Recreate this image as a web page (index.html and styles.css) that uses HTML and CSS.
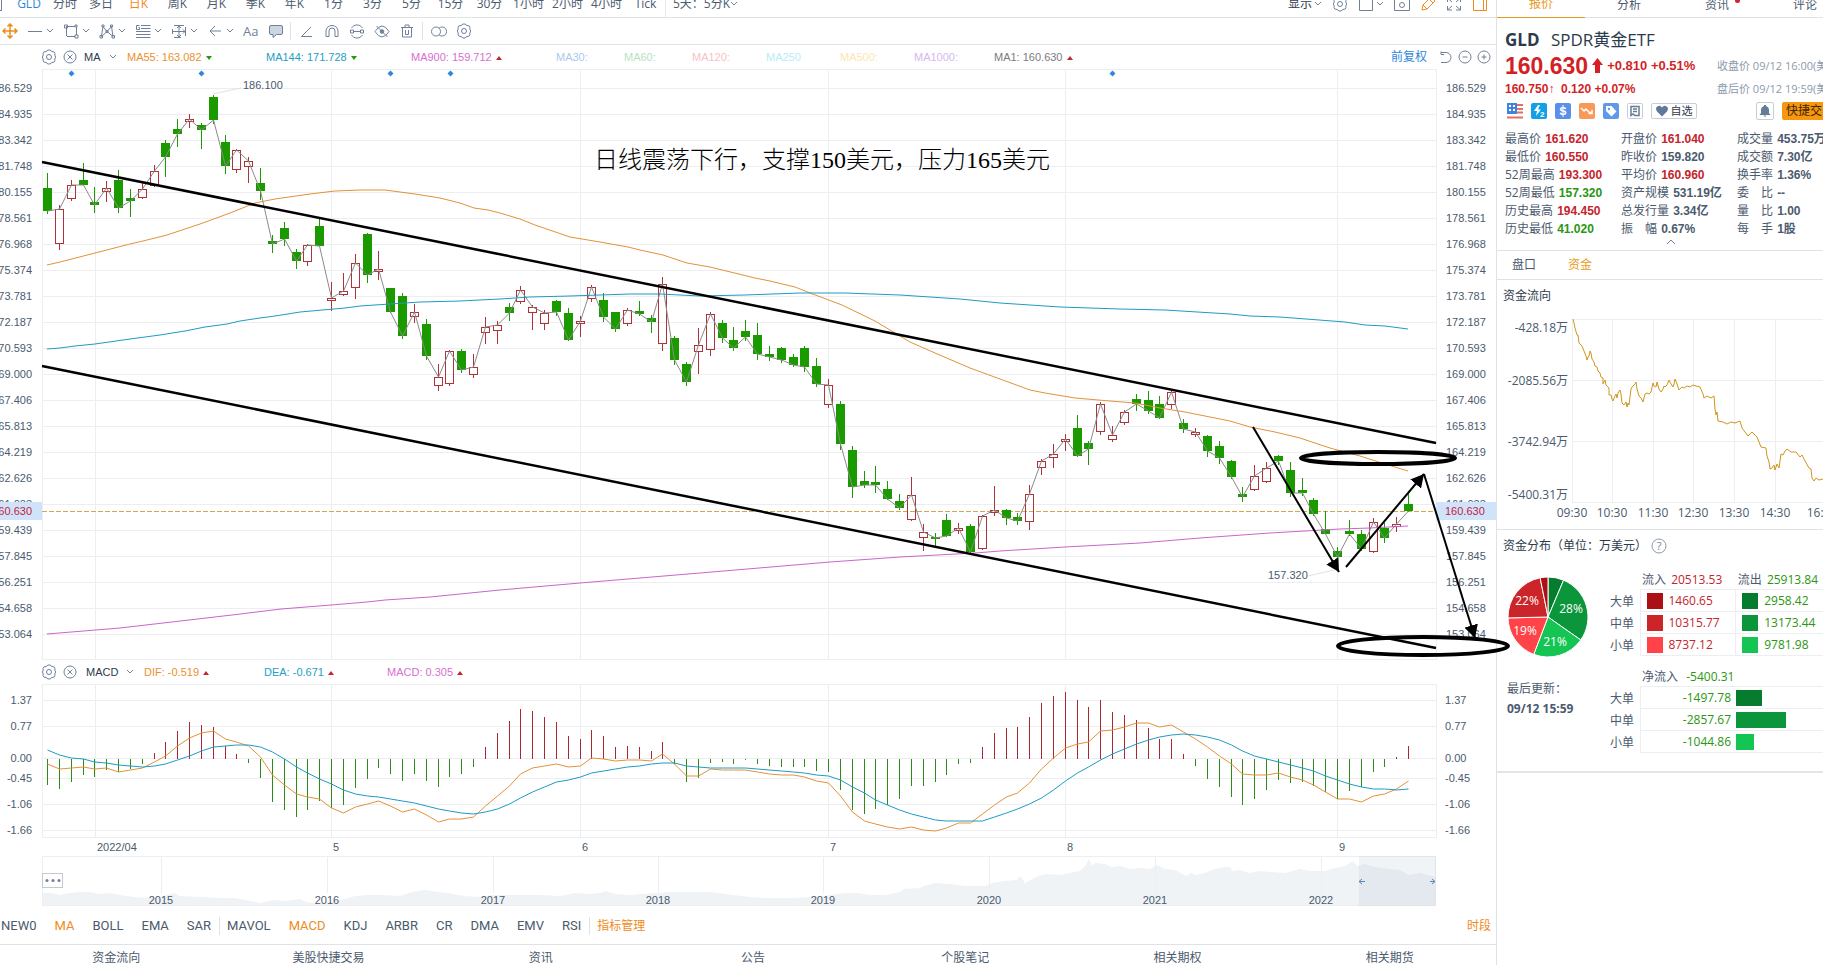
FILE: index.html
```html
<!DOCTYPE html>
<html lang="zh-CN">
<head>
    <meta charset="UTF-8">
    <meta name="viewport" content="width=device-width, initial-scale=1.0">
    <title>GLD SPDR黄金ETF</title>
    <link rel="stylesheet" href="styles.css">
</head>
<body>

    <!-- shared icons -->
    <svg class="sprite" aria-hidden="true">
        <symbol id="i-chev" viewBox="0 0 8 6"><path d="M1 1l3 3 3-3"/></symbol>
        <symbol id="i-gear" viewBox="0 0 16 16">
            <path d="M6 1.5Q8 .3 10 1.5L10.600 2.600Q12 2.400 13.400 3.100Q14.300 4.600 13.800 6L14.600 8L13.800 10Q14.300 11.400 13.400 12.900Q12 13.600 10.600 13.400L10 14.500Q8 15.700 6 14.500L5.400 13.400Q4 13.600 2.600 12.900Q1.700 11.400 2.200 10L1.400 8L2.200 6Q1.700 4.600 2.600 3.100Q4 2.400 5.400 2.600Z"/>
            <circle cx="8" cy="8" r="2.500"/>
        </symbol>
        <symbol id="i-close" viewBox="0 0 14 14"><circle cx="7" cy="7" r="6"/><path d="M4.500 4.500l5 5M9.500 4.500l-5 5"/></symbol>
    </svg>

    <div class="terminal">
        <main class="chart-area">

            <nav class="periods">
                <span class="edge-box"></span>
                <button class="period blue">GLD</button>
                <button class="period">分时</button>
                <button class="period">多日</button>
                <button class="period wide active">日K</button>
                <button class="period wide">周K</button>
                <button class="period wide">月K</button>
                <button class="period wide">季K</button>
                <button class="period wide">年K</button>
                <button class="period wide">1分</button>
                <button class="period wide">3分</button>
                <button class="period wide">5分</button>
                <button class="period wide">15分</button>
                <button class="period wide">30分</button>
                <button class="period wide">1小时</button>
                <button class="period wide">2小时</button>
                <button class="period wide">4小时</button>
                <button class="period wide">Tick</button>
                <button class="period combo">5天：5分K<svg class="chev"><use href="#i-chev"/></svg></button>
                <div class="view-tools">
                    <button class="tool dark">显示<svg class="chev"><use href="#i-chev"/></svg></button>
                    <button class="tool" aria-label="设置"><svg class="icon"><use href="#i-gear"/></svg></button>
                    <button class="tool" aria-label="布局"><svg class="icon" viewBox="0 0 16 16"><path d="M1.500 1.500h13v13h-13z"/></svg><svg class="chev"><use href="#i-chev"/></svg></button>
                    <button class="tool" aria-label="截图"><svg class="icon" viewBox="0 0 16 16"><path d="M.5 3.500h4l1-2h5l1 2h4v11H.5z"/><circle cx="8" cy="9" r="2.500"/></svg></button>
                    <button class="tool orange" aria-label="画线"><svg class="icon" viewBox="0 0 16 16"><path d="M2 14l1-5 8-8 4 4-8 8zM3 9l4 4M9 3l4 4"/></svg></button>
                    <button class="tool" aria-label="全屏"><svg class="icon" viewBox="0 0 16 16"><path d="M1.500 6V2H6M1.500 2L6 6M10 2h4.500v4M14.500 2L10 6M1.500 10v4H6M1.500 14L6 10M14.500 10v4H10M14.500 14L10 10"/></svg></button>
                    <button class="tool orange" aria-label="侧栏"><svg class="icon" viewBox="0 0 16 16"><path d="M1.500 1.500h13v13h-13zM11.500 1.500v13"/></svg></button>
                </div>
            </nav>

            <div class="draw-bar">
                <button class="draw orange" aria-label="移动"><svg class="icon" viewBox="0 0 16 16"><path stroke-width="1.500" d="M8 1v14M1 8h14M5.500 3.500L8 1l2.500 2.500M5.500 12.500L8 15l2.500-2.500M3.500 5.500L1 8l2.500 2.500M12.500 5.500L15 8l-2.500 2.500"/></svg></button>
                <button class="draw pick" aria-label="直线"><svg class="icon" viewBox="0 0 16 16"><path d="M1 8.500h14"/></svg><svg class="chev"><use href="#i-chev"/></svg></button>
                <button class="draw pick" aria-label="矩形"><svg class="icon" viewBox="0 0 16 16"><path d="M3 3.500h9M3.500 4v9M4 13.500h8M13.500 4v8M1.500 2h3v3h-3zM12 2h2v2h-2zM12 12h3v3h-3z"/></svg><svg class="chev"><use href="#i-chev"/></svg></button>
                <button class="draw pick" aria-label="形态"><svg class="icon" viewBox="0 0 16 16"><path d="M2.500 13L4 3.500l4 5 4.500-5L14 13.500l-6-5-5.500 5zM3 2h2v2H3zM11.500 2h2v2h-2zM1 12.500h2.500v2.500H1zM13 12.500h2.500v2.500H13zM7 7.500h2v2H7z"/></svg><svg class="chev"><use href="#i-chev"/></svg></button>
                <button class="draw pick" aria-label="斐波那契"><svg class="icon" viewBox="0 0 16 16"><path d="M6 2.500h9.500M6 5.500h9.500M1 8.500h14.500M1 11.500h14.500M1 14.500h14.500M4.500 2.500h-3v4h3v-2h-1"/></svg><svg class="chev"><use href="#i-chev"/></svg></button>
                <button class="draw pick" aria-label="测量"><svg class="icon" viewBox="0 0 16 16"><path d="M3 2.500h10M3 14.500h7M8 3v11M1.500 6v5M14.500 4v9M2 8.500h12M6 5l2-2 2 2M6 12l2 2 2-2M12 6.500l2 2-2 2"/></svg><svg class="chev"><use href="#i-chev"/></svg></button>
                <button class="draw pick" aria-label="箭头"><svg class="icon" viewBox="0 0 16 16"><path d="M14 8H3M8 3L3 8l5 5"/></svg><svg class="chev"><use href="#i-chev"/></svg></button>
                <button class="draw aa">Aa</button>
                <button class="draw wide" aria-label="批注"><svg class="icon" viewBox="0 0 16 16"><path fill="#ccd6e2" d="M3 2.500h10q1.500 0 1.500 1.500v6q0 1.500-1.500 1.500H8.500L5 14.500v-3H3q-1.500 0-1.500-1.500V4q0-1.500 1.500-1.500z"/></svg></button>
                <span class="bar-sep"></span>
                <button class="draw step" aria-label="角度"><svg class="icon" viewBox="0 0 16 16"><path d="M12 4L2.500 13.500H13"/></svg></button>
                <button class="draw step" aria-label="磁铁"><svg class="icon" viewBox="0 0 16 16"><path d="M2 13.500V8a6 5.500 0 0 1 12 0v5.500h-3V8a3 3 0 0 0-6 0v5.500z"/></svg></button>
                <button class="draw step" aria-label="同步"><svg class="icon" viewBox="0 0 16 16"><path d="M2.500 5a6.500 6.500 0 0 1 11 0M13.500 12a6.500 6.500 0 0 1-11 0M4.500 8.500h7M1.500 7h3v3h-3zM11.500 7h3v3h-3z"/></svg></button>
                <button class="draw step" aria-label="隐藏"><svg class="icon" viewBox="0 0 16 16"><path d="M1 8.500q7-11 14 0q-7 11-14 0zM2.500 3l11 11"/><circle cx="8" cy="8.500" r="1.800" fill="#70809a"/></svg></button>
                <button class="draw step" aria-label="删除"><svg class="icon" viewBox="0 0 16 16"><path d="M2 4.500h12M3.500 4.500v9.500h9V4.500M6 4V2h4v2M6.500 7v4.500M9.500 7v4.500M6.500 11.500h3"/></svg></button>
                <span class="bar-sep"></span>
                <button class="draw step" aria-label="对比"><svg class="icon" viewBox="0 0 16 16"><circle cx="5" cy="8.500" r="4.500"/><path d="M8 5.200a4.500 4.500 0 1 1 0 6.600"/></svg></button>
                <button class="draw step" aria-label="设置"><svg class="icon"><use href="#i-gear"/></svg></button>
            </div>

            <div class="legend">
                <svg class="icon"><use href="#i-gear"/></svg>
                <svg class="icon small"><use href="#i-close"/></svg>
                <button class="legend-name">MA<svg class="chev"><use href="#i-chev"/></svg></button>
                <span class="val w139 c-orange">MA55: 163.082 <i class="down"></i></span>
                <span class="val w145 c-blue">MA144: 171.728 <i class="down"></i></span>
                <span class="val w145 c-pink">MA900: 159.712 <i class="up"></i></span>
                <span class="val w68 c-30">MA30:</span>
                <span class="val w68 c-60">MA60:</span>
                <span class="val w74 c-120">MA120:</span>
                <span class="val w74 c-250">MA250</span>
                <span class="val w74 c-500">MA500:</span>
                <span class="val w80 c-1000">MA1000:</span>
                <span class="val c-gray">MA1: 160.630 <i class="up"></i></span>
                <div class="legend-tools">
                    <button class="tool blue">前复权</button>
                    <button class="tool" aria-label="撤销"><svg class="icon tiny" viewBox="0 0 14 14"><path d="M2 1.500v3h3M2 2.500h5a5 5 0 0 1 0 10H2"/></svg></button>
                    <button class="tool" aria-label="缩小"><svg class="icon tiny" viewBox="0 0 14 14"><circle cx="7" cy="7" r="6"/><path d="M4.500 7h5"/></svg></button>
                    <button class="tool" aria-label="放大"><svg class="icon tiny" viewBox="0 0 14 14"><circle cx="7" cy="7" r="6"/><path d="M4.500 7h5M7 4.500v5"/></svg></button>
                </div>
            </div>

            <svg id="price" class="chart price-chart" viewBox="0 69 1496 591">
                <defs>
                    <marker id="head" markerUnits="userSpaceOnUse" markerWidth="14" markerHeight="14" refX="13" refY="7" orient="auto">
                        <path d="M0 0l13 7-13 7z"/>
                    </marker>
                </defs>
            </svg>

            <div class="legend">
                <svg class="icon"><use href="#i-gear"/></svg>
                <svg class="icon small"><use href="#i-close"/></svg>
                <button class="legend-name macd-name">MACD<svg class="chev"><use href="#i-chev"/></svg></button>
                <span class="val w120 c-orange">DIF: -0.519 <i class="up"></i></span>
                <span class="val w123 c-blue">DEA: -0.671 <i class="up"></i></span>
                <span class="val c-pink">MACD: 0.305 <i class="up"></i></span>
            </div>

            <svg id="macd" class="chart" viewBox="0 684 1496 224"></svg>

            <nav class="indicators">
                <button>NEW0</button>
                <button class="active">MA</button>
                <button>BOLL</button>
                <button>EMA</button>
                <button>SAR</button>
                <button class="split">MAVOL</button>
                <button class="active">MACD</button>
                <button>KDJ</button>
                <button>ARBR</button>
                <button>CR</button>
                <button>DMA</button>
                <button>EMV</button>
                <button>RSI</button>
                <button class="split active">指标管理</button>
                <button class="last active">时段</button>
            </nav>

            <nav class="bottom-tabs">
                <a href="#">资金流向</a>
                <a href="#">美股快捷交易</a>
                <a href="#">资讯</a>
                <a href="#">公告</a>
                <a href="#">个股笔记</a>
                <a href="#">相关期权</a>
                <a href="#">相关期货</a>
            </nav>
        </main>

        <aside class="side">
            <div class="side-inner">
                <nav class="side-tabs">
                    <button class="active">报价</button>
                    <button>分析</button>
                    <button class="has-dot">资讯</button>
                    <button>评论</button>
                </nav>

                <section class="quote">
                    <h1><b>GLD</b> SPDR黄金ETF</h1>
                    <div class="last-price">
                        <div class="prices"><strong>160.630</strong>
                            <svg class="big-arrow" viewBox="0 0 11 16"><path d="M5.500 0L11 7H8v8H3V7H0z"/></svg>
                            <span>+0.810 +0.51%</span></div>
                        <span class="note">收盘价 09/12 16:00(美东)</span>
                    </div>
                    <div class="after-price">
                        <div class="prices">160.750↑&nbsp; 0.120 +0.07%</div>
                        <span class="note">盘后价 09/12 19:59(美东)</span>
                    </div>
                    <div class="badges">
                        <svg class="badge" viewBox="0 0 16 16"><path stroke="#e0705f" stroke-width="2" d="M10 2h6M10 6h6M0 14.500h16M10 9.500h6"/><path fill="#3f83dc" d="M0 0h10v11H0z"/><path fill="#fff" d="M2 2h2v2H2zM6 2h2v2H6zM2 6h2v2H2zM6 6h2v2H6z"/></svg>
                        <svg class="badge" viewBox="0 0 16 16"><rect width="16" height="16" rx="2" fill="#12a0e6"/><path fill="#fff" d="M7 2L3 8h3l-1 5 5-6.500H7L9 2z"/><text x="9" y="14" class="badge-num">2</text></svg>
                        <svg class="badge" viewBox="0 0 16 16"><rect width="16" height="16" rx="2" fill="#5b90ea"/><text x="8" y="12" class="badge-dollar">S</text><path stroke="#fff" d="M8 2v12"/></svg>
                        <svg class="badge" viewBox="0 0 16 16"><rect width="16" height="16" rx="2" fill="#f8995a"/><path fill="none" stroke="#fff" stroke-width="1.500" d="M2 5l3 3 2-2 4 4 1-1M13 7v3.500H9.500"/></svg>
                        <svg class="badge" viewBox="0 0 16 16"><rect width="16" height="16" rx="2" fill="#5f9aea"/><path fill="#fff" d="M3 3h5.500l5 5.500-5 5L3 8z"/><circle cx="6" cy="6" r="1.200" fill="#5f9aea"/></svg>
                        <svg class="badge" viewBox="0 0 16 16"><rect x=".5" y=".5" width="15" height="15" rx="1" fill="#fff" stroke="#c9ced6"/><path fill="none" stroke="#657b97" stroke-width="1.500" d="M4 3.500h8v9H8l-2-1.500-2 1.500zM6 6h4M6 8.500h4"/></svg>
                        <button class="fav"><svg viewBox="0 0 12 11"><path fill="#60799a" d="M6 11L1 6Q-1 3 1 1.200Q4-.8 6 2Q8-.8 11 1.200Q13 3 11 6z"/></svg>自选</button>
                        <button class="bell" aria-label="提醒"><svg viewBox="0 0 12 12"><path fill="#657b97" d="M5 0h2v1q3 1 3 4v3l1.500 2H.5L2 8V5q0-3 3-4zM4.500 10.500h3L6 12z"/></svg></button>
                        <button class="trade">快捷交易</button>
                    </div>

                    <div class="stats">
                        <p>最高价 <b class="red">161.620</b></p><p>开盘价 <b class="red">161.040</b></p><p>成交量 <b>453.75万</b></p>
                        <p>最低价 <b class="red">160.550</b></p><p>昨收价 <b>159.820</b></p><p>成交额 <b>7.30亿</b></p>
                        <p>52周最高 <b class="red">193.300</b></p><p>平均价 <b class="red">160.960</b></p><p>换手率 <b>1.36%</b></p>
                        <p>52周最低 <b class="green">157.320</b></p><p>资产规模 <b>531.19亿</b></p><p>委　比 <b>--</b></p>
                        <p>历史最高 <b class="red">194.450</b></p><p>总发行量 <b>3.34亿</b></p><p>量　比 <b>1.00</b></p>
                        <p>历史最低 <b class="green">41.020</b></p><p>振　幅 <b>0.67%</b></p><p>每　手 <b>1股</b></p>
                    </div>
                    <button class="fold" aria-label="收起"><svg viewBox="0 0 10 6"><path d="M1 5l4-4 4 4"/></svg></button>
                </section>

                <nav class="sub-tabs">
                    <button>盘口</button>
                    <button class="active">资金</button>
                </nav>

                <section class="flow">
                    <h2>资金流向</h2>
                    <svg id="flow" viewBox="0 0 352 219"></svg>
                </section>

                <section class="funds">
                    <h2>资金分布（单位：万美元）<svg class="help" viewBox="0 0 16 16"><circle cx="8" cy="8" r="7"/><text x="8" y="12">?</text></svg></h2>
                    <div class="funds-body">
                        <div class="funds-left">
                            <svg id="pie" viewBox="-40 -40 80 80"></svg>
                            <p>最后更新：</p>
                            <p><b>09/12 15:59</b></p>
                        </div>
                        <div class="funds-right">
                            <table>
                                <tr><td class="blank"></td><th>流入 <span class="red">20513.53</span></th><th>流出 <span class="green">25913.84</span></th></tr>
                                <tr><th class="row">大单</th><td class="red"><i class="sw in-l"></i>1460.65</td><td class="green"><i class="sw out-l"></i>2958.42</td></tr>
                                <tr><th class="row">中单</th><td class="red"><i class="sw in-m"></i>10315.77</td><td class="green"><i class="sw out-m"></i>13173.44</td></tr>
                                <tr><th class="row">小单</th><td class="red"><i class="sw in-s"></i>8737.12</td><td class="green"><i class="sw out-s"></i>9781.98</td></tr>
                            </table>
                            <table class="net">
                                <tr><td class="blank"></td><th colspan="2">净流入 &nbsp;<span class="green">-5400.31</span></th></tr>
                                <tr><th class="row">大单</th><td class="green num">-1497.78</td><td><i class="bar out-l" style="width: 26px"></i></td></tr>
                                <tr><th class="row">中单</th><td class="green num">-2857.67</td><td><i class="bar out-m" style="width: 50px"></i></td></tr>
                                <tr><th class="row">小单</th><td class="green num">-1044.86</td><td><i class="bar out-s" style="width: 18px"></i></td></tr>
                            </table>
                        </div>
                    </div>
                </section>
            </div>
        </aside>
    </div>

    <script src="chart.js"></script>
</body>
</html>
```
FILE: styles.css
```css
* {
    box-sizing: border-box;
}
body {
    margin: 0;
    overflow: hidden;
    background: #fff;
    color: #4b5a6e;
    font-family: "Open Sans", "Noto Sans CJK SC", sans-serif;
    font-size: 12px;
    line-height: 18px;
}
button {
    margin: 0;
    padding: 0;
    border: 0;
    background: none;
    color: inherit;
    font: inherit;
    cursor: pointer;
    white-space: nowrap;
}
h1, h2, p {
    margin: 0;
    font-weight: normal;
}
a {
    color: inherit;
    text-decoration: none;
}
.sprite {
    display: none;
}
.terminal {
    display: grid;
    grid-template-columns: minmax(0, 1fr) 327px;
    min-height: 100vh;
}
.icon, .chev {
    width: 16px;
    height: 16px;
    flex: none;
    fill: none;
    stroke: #70809a;
}
.icon.small, .icon.tiny {
    width: 14px;
    height: 14px;
}
.chev {
    width: 8px;
    height: 6px;
}
.orange .icon {
    stroke: #ee8b1c;
}
.red { color: #c4242c; }
.green { color: #2a9612; }
.blue { color: #2f86dc; }

.periods {
    display: flex;
    align-items: center;
    height: 27px;
    margin-top: -9px;
    border-bottom: 1px solid #dfe3e8;
}
.edge-box {
    width: 2px;
    height: 14px;
    margin-right: 9px;
    border: 1px solid #70809a;
    border-left: 0;
}
.period {
    width: 36px;
    text-align: center;
}
.period.wide {
    width: 39px;
}
.period.active {
    color: #ee8b1c;
}
.combo {
    display: flex;
    align-items: center;
    width: auto;
    height: 100%;
    padding-left: 7px;
    border-left: 1px solid #e6e9ed;
}
.view-tools {
    display: flex;
    align-items: center;
    gap: 10px;
    margin-left: auto;
    padding-right: 8px;
}
.tool {
    display: flex;
    align-items: center;
    gap: 2px;
}
.tool.dark {
    color: #2d3a4c;
}

.draw-bar {
    display: flex;
    align-items: center;
    height: 27px;
    border-bottom: 1px solid #dfe3e8;
}
.draw {
    display: flex;
    align-items: center;
    gap: 3px;
    padding-left: 2px;
    color: #70809a;
}
.draw.orange {
    width: 25px;
}
.draw.pick {
    width: 36px;
}
.draw.aa {
    width: 25px;
    font-size: 13px;
}
.draw.wide {
    width: 24px;
}
.bar-sep {
    width: 1px;
    height: 18px;
    margin-right: 6px;
    background: #dfe3e8;
}
.draw.step {
    width: 25px;
}

.legend {
    display: flex;
    align-items: center;
    height: 24px;
    padding-left: 41px;
    font-family: "Liberation Sans", "Noto Sans CJK SC", sans-serif;
    font-size: 11px;
    white-space: nowrap;
}
.legend .small {
    margin-left: 6px;
}
.legend-name {
    display: flex;
    align-items: center;
    gap: 8px;
    width: 43px;
    margin-left: 7px;
    color: #2d3a4c;
}
.macd-name {
    width: 58px;
    margin-left: 9px;
}
.legend-tools {
    display: flex;
    align-items: center;
    gap: 5px;
    margin-left: auto;
    padding-right: 5px;
}
.legend-tools .blue {
    margin-right: 7px;
    font-size: 12px;
}
.w139 { width: 139px; }
.w145 { width: 145px; }
.w120 { width: 120px; }
.w123 { width: 123px; }
.w68 { width: 68px; }
.w74 { width: 74px; }
.w80 { width: 80px; }
.c-orange { color: #ea9130; }
.c-blue { color: #23a0c4; }
.c-pink { color: #d96fcf; }
.c-gray { color: #7c7c7c; }
.c-30 { color: #a9c9f0; }
.c-60 { color: #b4e2c4; }
.c-120 { color: #f8bfc4; }
.c-250 { color: #b5eef6; }
.c-500 { color: #fbe6b4; }
.c-1000 { color: #d3b8ee; }
.up, .down {
    display: inline-block;
    margin-left: 1px;
    border: 3px solid transparent;
    border-top-width: 0;
    border-bottom: 4px solid #c4242c;
    vertical-align: 1px;
}
.down {
    border-bottom: 0;
    border-top: 4px solid #2a9612;
}

.chart {
    display: block;
    width: 100%;
    overflow: visible;
    fill: none;
    font-family: "Liberation Sans", sans-serif;
    font-size: 11px;
}
.price-chart {
    position: relative;
    z-index: 1;
}
.chart text {
    fill: #4b5a6e;
}
.chart .mid {
    text-anchor: middle;
}
.chart .end {
    text-anchor: end;
}
.chart .now {
    fill: #c8203c;
}
.chart .remark {
    fill: #000;
    font-family: "Noto Sans CJK SC", sans-serif;
    font-size: 24px;
    font-weight: 300;
}
.remark .num {
    font-family: "Liberation Serif", serif;
    font-weight: 400;
}
.grid {
    stroke: #eceef1;
    shape-rendering: crispEdges;
}
.band { fill: #cfe4fb; }
.now-line {
    stroke: #cfa950;
    stroke-dasharray: 5 2;
}
.k-down {
    fill: #1b9a00;
    stroke: #1b9a00;
}
.k-up { stroke: #ad3338; }
.k-up, .k-down, .macd-up, .macd-down {
    shape-rendering: crispEdges;
}
.macd-up { stroke: #a82a30; }
.macd-down { stroke: #2d8c18; }
.ma1 { stroke: #8a8a8a; }
.line-orange { stroke: #e3923a; }
.line-blue { stroke: #1f9bc4; }
.line-pink { stroke: #ca66c8; }
.dot { fill: #2f86dc; }
.leader { stroke: #dde1e6; }
.trend {
    stroke: #000;
    stroke-width: 2;
}
.channel {
    stroke: #000;
    stroke-width: 2.5;
}
.ring {
    stroke: #000;
    stroke-width: 4;
}
#head path { fill: #000; }
.nav-area { fill: #eff3f6; }
.nav-sel {
    fill: #8fa3b8;
    fill-opacity: .12;
}
.nav-arrow { stroke: #5f86b8; }
.more-box {
    fill: #fff;
    stroke: #c3c9d1;
}
.more-dot { fill: #70809a; }

.indicators {
    display: flex;
    align-items: center;
    gap: 18px;
    height: 37px;
    padding: 0 5px 0 1px;
    border-bottom: 1px solid #dfe3e8;
    font-family: Roboto, "Noto Sans CJK SC", sans-serif;
    font-size: 13px;
}
.indicators .split {
    margin-left: -10px;
    padding-left: 7px;
    border-left: 1px solid #dfe3e8;
}
.indicators .active {
    color: #ee8b1c;
}
.indicators .last {
    margin-left: auto;
}
.indicators .split.active, .indicators .last {
    font-size: 12px;
}
.bottom-tabs {
    display: grid;
    grid-template-columns: repeat(7, 1fr);
    height: 25px;
    padding-left: 10px;
    line-height: 25px;
    text-align: center;
}

/* quote side */
.side {
    overflow: hidden;
    border-left: 1px solid #dfe3e8;
}
.side-inner {
    width: 352px;
}
.side-tabs {
    display: grid;
    grid-template-columns: repeat(4, 1fr);
    height: 27px;
    margin-top: -9px;
    border-bottom: 1px solid #dfe3e8;
}
.side-tabs .active {
    height: 27px;
    border-bottom: 1px solid #e89a20;
    color: #e89a20;
}
.has-dot::after {
    content: "";
    display: inline-block;
    width: 5px;
    height: 5px;
    margin-left: 6px;
    margin-right: -11px;
    border-radius: 50%;
    background: #d4242c;
    vertical-align: 6px;
}
.quote {
    padding: 9px 0 0 8px;
    border-bottom: 1px solid #dfe3e8;
}
h1 {
    color: #2d3a4c;
    font-size: 17px;
    line-height: 26px;
}
h1 b {
    margin-right: 7px;
}
.last-price, .after-price {
    display: flex;
    align-items: center;
    height: 26px;
    color: #d41f26;
    font-family: "Liberation Sans", sans-serif;
    font-weight: bold;
}
.after-price {
    height: 20px;
}
.prices {
    display: flex;
    align-items: center;
    flex: 0 0 212px;
    gap: 4px;
}
.prices strong {
    font-size: 23px;
}
.prices span {
    font-size: 13px;
}
.big-arrow {
    width: 11px;
    height: 16px;
    fill: #d41f26;
}
.note {
    color: #8c9aac;
    font-family: "Open Sans", "Noto Sans CJK SC", sans-serif;
    font-size: 11px;
    font-weight: normal;
    white-space: nowrap;
}
.badges {
    display: flex;
    align-items: center;
    gap: 8px;
    height: 24px;
    padding-left: 2px;
}
.badge {
    width: 16px;
    height: 16px;
}
.badge-num, .badge-dollar {
    fill: #fff;
    font: bold 8px "Liberation Sans", sans-serif;
}
.badge-dollar {
    font-size: 11px;
    text-anchor: middle;
}
.fav, .bell {
    display: flex;
    align-items: center;
    justify-content: center;
    gap: 3px;
    width: 46px;
    height: 16px;
    border: 1px solid #c9ced6;
    border-radius: 2px;
    color: #2d3a4c;
    font-size: 11px;
}
.fav svg, .bell svg {
    width: 12px;
    height: 12px;
}
.bell {
    width: 18px;
    height: 18px;
    margin-left: 51px;
}
.trade {
    height: 18px;
    padding: 0 4px;
    border-radius: 2px;
    background: #f7960f;
    color: #402500;
}
.stats {
    display: grid;
    grid-template-columns: repeat(3, 116px);
    margin-top: 7px;
    white-space: nowrap;
}
.stats b {
    margin-left: 1px;
    font-family: "Liberation Sans", "Noto Sans CJK SC", sans-serif;
}
.fold {
    display: block;
    width: 10px;
    height: 12px;
    padding-bottom: 5px;
}
.quote .fold {
    margin-left: 161px;
}
.fold svg {
    display: block;
    fill: none;
    stroke: #70809a;
}
.sub-tabs {
    display: flex;
    gap: 32px;
    height: 29px;
    padding-left: 15px;
    border-bottom: 1px solid #dfe3e8;
}
.sub-tabs .active {
    color: #e89a20;
}
h2 {
    display: flex;
    align-items: center;
    height: 30px;
    padding: 1px 0 0 6px;
    color: #2d3a4c;
    font-size: 12px;
}
.flow {
    border-bottom: 1px solid #dfe3e8;
}
.flow svg {
    display: block;
    width: 100%;
    fill: none;
}
.flow text {
    fill: #4b5a6e;
    text-anchor: middle;
}
.flow .end {
    text-anchor: end;
}
.flow-line { stroke: #d0961c; }
.help {
    width: 16px;
    height: 16px;
    margin-left: 4px;
    fill: none;
    stroke: #8c9aac;
}
.help text {
    fill: #70809a;
    stroke: none;
    font-size: 11px;
    text-anchor: middle;
}
.funds {
    border-bottom: 2px solid #e2e5ea;
}
.funds-body {
    display: grid;
    grid-template-columns: 102px 1fr;
    padding: 9px 0 18px 11px;
}
.funds-left {
    padding-top: 8px;
    line-height: 20px;
}
.funds-left p {
    margin-left: -1px;
}
#pie {
    display: block;
    width: 80px;
    height: 80px;
    margin-bottom: 22px;
}
#pie path {
    stroke: #fff;
}
#pie text {
    fill: #fff;
    text-anchor: middle;
}
table {
    width: 222px;
    border-collapse: collapse;
    table-layout: fixed;
}
.net {
    margin-top: 10px;
}
.blank {
    width: 30px;
}
tr {
    height: 22px;
}
tr:first-child {
    height: 20px;
}
th, td {
    padding: 0;
    font-weight: normal;
    line-height: 18px;
    text-align: left;
    white-space: nowrap;
}
th {
    padding: 2px 0 0 2px;
}
th span {
    margin-left: 2px;
}
th.row {
    padding-left: 0;
}
td:not(.blank) {
    border: 1px solid #eceef1;
}
.net td:not(.blank) {
    border-width: 1px 0;
}
.net td.num {
    padding-right: 5px;
    border-left-width: 1px;
    text-align: right;
}
.sw, .bar {
    display: inline-block;
    width: 16px;
    height: 16px;
    margin: 0 6px;
    vertical-align: middle;
}
.bar {
    margin: 0;
}
.in-l { background: #ab1015; fill: #ab1015; }
.in-m { background: #cb252a; fill: #cb252a; }
.in-s { background: #ff4348; fill: #ff4348; }
.out-l { background: #067c2f; fill: #067c2f; }
.out-m { background: #0b963b; fill: #0b963b; }
.out-s { background: #14c553; fill: #14c553; }
```
FILE: chart.js
```js
const NS = 'http://www.w3.org/2000/svg';
const LEFT = 42;
const RIGHT = 1436;

function add(parent, tag, attrs, text) {
    const el = document.createElementNS(NS, tag);
    for (const key in attrs) el.setAttribute(key, attrs[key]);
    if (text !== undefined) el.textContent = text;
    parent.appendChild(el);
    return el;
}
function line(parent, cls, x1, y1, x2, y2) {
    return add(parent, 'line', { class: cls, x1: x1, y1: y1, x2: x2, y2: y2 });
}
function label(parent, x, y, text, cls) {
    return add(parent, 'text', { x: x, y: y + 4, class: cls || '' }, text);
}
function poly(parent, cls, points) {
    return add(parent, 'polyline', { class: cls, points: points.trim() });
}
// x of the n-th trading day
function dayX(i) {
    return Math.round(47 + i * 11.835);
}

const months = [[95, '2022/04'], [331, '5'], [580, '6'], [828, '7'], [1065, '8'], [1337, '9']];

// ---- price chart ----
const price = document.getElementById('price');
const levels = ['186.529', '184.935', '183.342', '181.748', '180.155', '178.561', '176.968', '175.374',
    '173.781', '172.187', '170.593', '169.000', '167.406', '165.813', '164.219', '162.626', '161.033',
    '159.439', '157.845', '156.251', '154.658', '153.064'];

// direction, high, body top, body bottom, low
const candles = `g173,188,211,214 r205,209,244,250 r180,185,199,201 g163,180,185,185 g187,202,205,213
r181,188,192,202 g170,180,208,213 g189,198,201,217 r183,189,198,199 r165,171,186,187
g140,143,157,177 g119,129,134,147 r114,119,122,128 g123,125,130,149 g95,97,120,124
g135,142,166,174 r149,150,170,173 r157,161,167,183 g168,183,191,200 g235,241,244,253
g222,228,239,246 g249,252,261,269 r244,245,262,266 g219,226,246,246 r282,298,301,311
r273,291,295,296 r254,263,288,299 g233,234,275,283 r251,269,272,280 g288,288,312,313
g293,296,336,339 r304,312,317,323 g319,324,356,360 r364,377,386,391 r350,351,384,386
g349,351,370,373 r354,367,375,378 r317,327,333,344 r321,325,331,344 g303,307,313,321
r286,290,302,304 r305,307,313,330 r310,313,324,330 g300,301,312,316 g308,313,340,341
r316,321,324,337 r285,287,299,302 g293,300,317,322 g312,312,329,332 r308,310,324,326
g301,311,314,316 g315,318,322,333 r277,284,344,351 g336,338,360,365 g362,364,382,386
r328,345,352,374 r312,314,350,356 g320,323,338,343 g327,340,348,351 g320,331,337,341
g323,335,354,360 g346,354,357,361 g347,348,360,363 g354,357,365,367 g346,348,367,372
g358,366,384,387 r379,385,405,408 g401,404,444,450 g446,450,487,498 g471,481,485,488
g466,482,485,493 g481,489,499,500 g494,501,508,510 r477,495,520,521 r524,532,538,551
g533,537,538,548 g514,520,536,537 r523,528,531,534 g524,526,552,553 r515,516,549,550
r486,510,513,516 g509,510,518,525 g513,517,521,525 r485,494,522,530 r459,461,468,475
r444,454,458,468 r434,439,442,451 g415,428,456,457 g441,443,449,465 r402,404,432,435
r426,435,440,442 r410,412,423,425 g394,399,404,411 g391,400,411,414 g396,404,418,419
r390,392,405,409 g419,423,429,433 r428,432,435,437 g435,436,451,457 g441,446,458,464
g460,461,477,479 g487,494,497,502 r465,476,490,491 r462,468,482,483 g455,456,461,465
g462,470,493,497 g478,490,493,496 g498,500,514,516 g511,529,534,534 g547,551,557,562
g520,531,534,536 g530,534,549,551 r518,522,552,553 g523,528,538,543 r517,524,527,532
g494,504,511,512`.split(/\s+/);

add(price, 'rect', { class: 'grid', x: LEFT + 0.5, y: 69.5, width: RIGHT - LEFT, height: 590 });
months.forEach(m => line(price, 'grid', m[0] + 0.5, 69, m[0] + 0.5, 659));
levels.forEach((text, i) => {
    const y = 88 + i * 26;
    line(price, 'grid', LEFT, y + 0.5, RIGHT, y + 0.5);
    label(price, 32, y, text, 'end');
    label(price, 1446, y, text);
});

line(price, 'now-line', LEFT, 511.5, RIGHT, 511.5);
let closes = '';
candles.forEach((c, i) => {
    const up = c[0] === 'r';
    const [high, top, bottom, low] = c.slice(1).split(',').map(Number);
    const x = dayX(i);
    const cls = up ? 'k-up' : 'k-down';
    line(price, cls, x + 0.5, high, x + 0.5, top);
    line(price, cls, x + 0.5, bottom, x + 0.5, low);
    add(price, 'rect', { class: cls, x: x - 3.5, y: top + 0.5, width: 8, height: Math.max(bottom - top - 1, 1) });
    closes += `${x + 0.5},${up ? top : bottom} `;
});
poly(price, 'ma1', closes);
poly(price, 'line-orange', `47,265 60,262 95,253 130,244 143,241 167,235 200,224 230,213 255,203 275,199 310,194
335,191 360,190 385,190 415,194 440,198 460,203 474,208 488,210 500,213 520,219 535,225 570,237 600,242 628,247
640,250 663,255 687,263 710,267 755,278 770,281 795,287 810,293 842,305 875,321 910,342 935,353 970,368 1000,379
1030,390 1045,393 1075,398 1110,401 1135,403 1160,408 1185,412 1200,415 1230,421 1250,427 1275,432 1300,438
1330,448 1360,456 1385,464 1408,471`);
poly(price, 'line-blue', `47,349 60,348 75,346 95,344 130,339 160,335 185,331 205,327 227,324 240,321 260,318
275,316 300,312 345,308 360,306 390,304 420,302 460,301 500,299 530,297 570,296 630,294 660,294 700,296 745,295
800,293 845,293 900,295 960,299 1000,303 1060,307 1120,309 1165,310 1230,314 1250,316 1280,317 1345,322 1365,325
1385,326 1408,329`);
poly(price, 'line-pink', `47,634 120,628 232,615 281,609 331,605 367,602 385,600 430,597 500,590 580,583 700,573
830,562 900,557 975,553 1000,551 1065,547 1140,543 1200,538 1270,533 1340,529 1370,528 1408,526`);

[71, 201, 390, 450, 1112].forEach(x => add(price, 'path', { class: 'dot', d: `M${x - 2.5} 73.500l3-3 3 3-3 3z` }));
line(price, 'leader', 213, 94, 241, 88);
label(price, 243, 85, '186.100');
line(price, 'leader', 1308, 576, 1334, 570);
label(price, 1268, 575, '157.320');

// current price tags on both axes
add(price, 'rect', { class: 'band', x: 0, y: 502, width: LEFT, height: 18 });
add(price, 'rect', { class: 'band', x: RIGHT, y: 502, width: 60, height: 18 });
label(price, 32, 511, '160.630', 'end now');
label(price, 1445, 511, '160.630', 'now');

// user drawings
line(price, 'channel', LEFT, 162, RIGHT, 443);
line(price, 'channel', LEFT, 366, RIGHT, 648);
[[1253, 427, 1339, 572], [1346, 567, 1424, 474], [1424, 474, 1475, 638]].forEach(a => {
    line(price, 'trend', a[0], a[1], a[2], a[3]).setAttribute('marker-end', 'url(#head)');
});
add(price, 'ellipse', { class: 'ring', cx: 1378, cy: 458, rx: 77, ry: 6 });
add(price, 'ellipse', { class: 'ring', cx: 1423, cy: 646, rx: 85, ry: 9 });
const remark = add(price, 'text', { class: 'remark', x: 594, y: 168 });
['日线震荡下行，支撑', '150', '美元，压力', '165', '美元'].forEach((part, i) => {
    add(remark, 'tspan', { class: i % 2 ? 'num' : '' }, part);
});

// ---- MACD ----
const macd = document.getElementById('macd');
const ZERO = 759;
const bars = [785, 789, 782, 775, 777, 770, 772, 769, 764, 753, 742, 731, 722, 725, 727, 746, 754, 763, 778, 802,
    810, 817, 810, 801, 808, 805, 788, 779, 768, 774, 781, 774, 781, 787, 777, 774, 767, 747, 733, 721, 709, 711,
    717, 722, 736, 739, 730, 736, 747, 746, 747, 751, 742, 764, 782, 778, 763, 762, 764, 760, 764, 766, 767, 767,
    767, 771, 772, 790, 810, 814, 809, 805, 799, 786, 786, 782, 775, 764, 763, 747, 733, 728, 727, 717, 703, 696,
    692, 700, 707, 700, 712, 715, 720, 728, 739, 739, 754, 766, 779, 787, 797, 805, 799, 790, 780, 783, 782, 786,
    792, 799, 791, 787, 772, 767, 757, 746];
const dif = [764, 769, 768, 767, 769, 768, 772, 770, 768, 762, 756, 746, 738, 733, 731, 739, 742, 746, 757, 775,
    785, 794, 797, 799, 808, 813, 807, 804, 801, 806, 812, 809, 815, 822, 819, 819, 817, 806, 796, 786, 774, 768,
    766, 764, 767, 766, 758, 759, 761, 760, 760, 761, 754, 764, 776, 776, 769, 770, 770, 770, 772, 774, 775, 775,
    777, 781, 783, 796, 812, 821, 824, 827, 829, 827, 830, 831, 828, 823, 823, 814, 805, 797, 793, 783, 769, 758,
    748, 744, 742, 731, 730, 727, 723, 723, 727, 725, 732, 739, 747, 756, 764, 774, 775, 775, 773, 777, 780, 785,
    792, 799, 799, 802, 796, 794, 789, 781];
const dea = [750, 755, 758, 759, 762, 763, 765, 766, 767, 766, 764, 760, 756, 751, 747, 746, 745, 745, 747, 752,
    759, 767, 773, 779, 784, 790, 794, 796, 797, 799, 801, 803, 806, 809, 811, 813, 814, 812, 809, 804, 798, 792,
    787, 782, 780, 777, 773, 771, 769, 767, 766, 764, 763, 763, 766, 767, 768, 768, 768, 768, 769, 770, 771, 772,
    773, 775, 776, 780, 787, 793, 800, 805, 810, 814, 817, 820, 821, 821, 821, 821, 817, 813, 809, 804, 798, 790,
    781, 773, 767, 760, 754, 749, 744, 740, 737, 735, 734, 735, 737, 740, 745, 751, 756, 759, 762, 765, 768, 771,
    776, 780, 784, 787, 789, 789, 790, 789];

add(macd, 'rect', { class: 'grid', x: LEFT + 0.5, y: 684.5, width: RIGHT - LEFT, height: 153 });
[[700, '1.37'], [726, '0.77'], [758, '0.00'], [778, '-0.45'], [804, '-1.06'], [830, '-1.66']].forEach(g => {
    line(macd, 'grid', LEFT, g[0] + 0.5, RIGHT, g[0] + 0.5);
    label(macd, 32, g[0], g[1], 'end');
    label(macd, 1445, g[0], g[1]);
});
months.forEach(m => {
    line(macd, 'grid', m[0] + 0.5, 684, m[0] + 0.5, 837);
    label(macd, m[0] + 2, 847, m[1]);
});
bars.forEach((y, i) => {
    const x = dayX(i) + 0.5;
    line(macd, y < ZERO ? 'macd-up' : 'macd-down', x, ZERO, x, y);
});
const series = values => values.map((y, i) => `${dayX(i) + 0.5},${y}`).join(' ');
poly(macd, 'line-orange', series(dif));
poly(macd, 'line-blue', series(dea));

// ---- history navigator ----
add(macd, 'polygon', {
    class: 'nav-area',
    points: `42,905 42,893 52,893 60,895 70,893 80,892 90,892 100,894 110,893 120,895 135,897 150,898 160,897 174,893
180,896 200,897 220,898 235,898 245,900 260,903 275,900 285,901 300,899 306,902 320,904 327,902 345,899 355,896
370,895 385,895 400,896 412,892 425,890 438,892 447,893 465,896 480,897 493,895 520,895 540,895 560,896 575,893
590,894 600,893 606,891 615,894 630,895 655,893 670,892 710,892 725,894 750,897 765,898 790,898 810,897 830,895
845,893 857,893 870,895 885,895 900,892 904,889 920,888 924,886 935,883 950,884 965,886 985,886 992,883 1005,881
1017,880 1020,876 1025,883 1036,877 1045,874 1060,875 1070,873 1080,871 1086,865 1089,859 1092,866 1095,863
1105,864 1112,867 1120,866 1130,869 1140,868 1150,869 1157,865 1165,869 1175,870 1186,876 1191,873 1196,875
1205,873 1215,869 1225,867 1230,867 1232,871 1240,870 1250,873 1260,871 1270,872 1285,873 1300,869 1310,871
1325,871 1335,868 1345,866 1353,861 1357,866 1365,864 1375,867 1390,869 1400,870 1409,875 1420,873 1436,877
1436,905`
});
[[161, '2015'], [327, '2016'], [493, '2017'], [658, '2018'], [823, '2019'], [989, '2020'], [1155, '2021'], [1321, '2022']].forEach(n => {
    line(macd, 'grid', n[0] + 0.5, 856, n[0] + 0.5, 893);
    label(macd, n[0], 900, n[1], 'mid');
});
add(macd, 'rect', { class: 'grid', x: LEFT + 0.5, y: 856.5, width: RIGHT - LEFT - 1, height: 49 });
add(macd, 'rect', { class: 'nav-sel', x: 1359, y: 856, width: 77, height: 50 });
add(macd, 'path', { class: 'nav-arrow', d: 'M1365 881.500h-6M1362 879l-3 2.500 3 2.500M1430 881.500h5M1432 879l3 2.500-3 2.500' });
add(macd, 'rect', { class: 'more-box', x: 42.5, y: 873.5, width: 20, height: 14 });
[47, 53, 59].forEach(x => add(macd, 'circle', { class: 'more-dot', cx: x, cy: 880.5, r: 1.5 }));

// ---- money flow ----
const flow = document.getElementById('flow');
[[9, 18, '-428.18万'], [70, 71, '-2085.56万'], [131, 132, '-3742.94万'], [192, 185, '-5400.31万']].forEach(r => {
    line(flow, 'grid', 75, r[0] + 0.5, 352, r[0] + 0.5);
    label(flow, 71, r[1], r[2], 'end');
});
[[75, '09:30'], [115, '10:30'], [156, '11:30'], [196, '12:30'], [237, '13:30'], [278, '14:30'], [325, '16:00']].forEach(t => {
    if (t[0] < 300) line(flow, 'grid', t[0] + 0.5, 9, t[0] + 0.5, 192);
    label(flow, t[0], 203, t[1]);
});
poly(flow, 'flow-line', `76,9 77,13 78,18 80,25 81,25 82,33 84,35 85,36 87,41 89,46 90,50 91,47 92,46 93,41 94,43
95,49 97,52 98,56 100,57 101,61 103,63 104,67 106,68 106,74 108,70 109,75 111,77 112,78 112,85 114,85 115,89 116,91
118,86 119,84 120,88 121,83 123,80 124,84 125,93 127,95 129,92 130,97 131,93 132,95 134,79 135,77 136,76 138,74
139,72 140,79 142,86 144,88 146,92 148,84 150,83 152,84 154,82 156,73 157,76 159,77 160,72 162,79 164,82 166,79
167,76 168,77 170,75 172,70 174,74 176,77 177,74 178,69 180,74 182,80 185,77 187,78 190,76 193,77 196,75 199,76
203,77 206,84 207,88 210,86 214,88 217,86 218,99 219,105 220,102 221,111 226,112 230,114 234,112 238,113 243,111
245,118 248,122 251,126 255,122 257,124 260,127 262,132 264,137 269,138 270,146 272,152 273,159 275,158 277,155
278,160 280,154 282,158 284,144 286,145 288,141 290,139 294,142 299,142 303,147 305,145 308,151 312,158 314,159
315,168 317,171 319,168 322,170 326,169`);

// ---- order size pie ----
const pie = document.getElementById('pie');
const parts = [['out-l', 2958.42], ['out-m', 13173.44], ['out-s', 9781.98], ['in-s', 8737.12], ['in-m', 10315.77], ['in-l', 1460.65]];
const total = parts.reduce((sum, p) => sum + p[1], 0);
let angle = 0;
const at = (a, r) => `${(Math.sin(a) * r).toFixed(2)} ${(-Math.cos(a) * r).toFixed(2)}`;
parts.forEach(p => {
    const next = angle + p[1] / total * Math.PI * 2;
    add(pie, 'path', { class: p[0], d: `M0 0L${at(angle, 40)}A40 40 0 0 1 ${at(next, 40)}Z` });
    angle = next;
});
[[23, -8, '28%'], [7, 25, '21%'], [-23, 14, '19%'], [-21, -16, '22%']].forEach(t => label(pie, t[0], t[1], t[2]));
```
